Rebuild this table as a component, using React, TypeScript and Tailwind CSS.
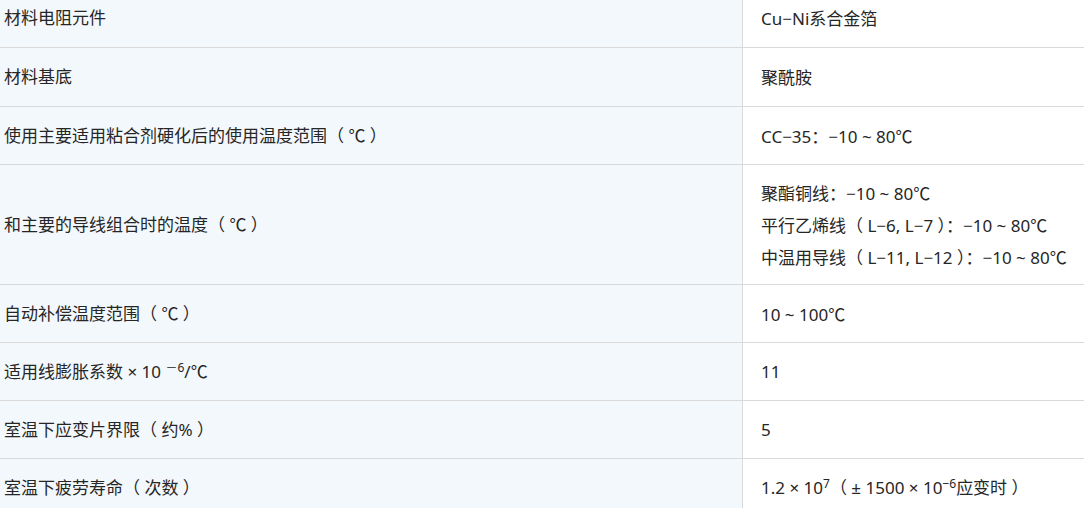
const C = () => <span style={{ fontFamily: '"Noto Sans CJK SC", sans-serif' }}>℃</span>;

const rows: { h: string; label: React.ReactNode; value: React.ReactNode[] }[] = [
  { h: "h-[59px]", label: "材料电阻元件", value: ["Cu−Ni系合金箔"] },
  { h: "h-[59px]", label: "材料基底", value: ["聚酰胺"] },
  {
    h: "h-[58px]",
    label: <>使用主要适用粘合剂硬化后的使用温度范围（ <C /> ）</>,
    value: [<>CC−35：−10 ~ 80<C /></>],
  },
  {
    h: "h-[120px]",
    label: <>和主要的导线组合时的温度（ <C /> ）</>,
    value: [
      <>聚酯铜线：−10 ~ 80<C /></>,
      <>平行乙烯线（ L−6, L−7 ）：−10 ~ 80<C /></>,
      <>中温用导线（ L−11, L−12 ）：−10 ~ 80<C /></>,
    ],
  },
  { h: "h-[58px]", label: <>自动补偿温度范围（ <C /> ）</>, value: [<>10 ~ 100<C /></>] },
  {
    h: "h-[58px]",
    label: (
      <>
        适用线膨胀系数 × 10 <sup className="text-[12px] leading-none">－6</sup>/<C />
      </>
    ),
    value: ["11"],
  },
  { h: "h-[58px]", label: "室温下应变片界限（ 约% ）", value: ["5"] },
  {
    h: "h-[58px]",
    label: "室温下疲劳寿命（ 次数 ）",
    value: [
      <>
        1.2 × 10<sup className="text-[12px] leading-none">7</sup>（ ± 1500 × 10
        <sup className="text-[12px] leading-none">−6</sup>应变时 ）
      </>,
    ],
  },
];

export default function App() {
  return (
    <div
      className="w-[1084px] h-[508px] overflow-hidden bg-white text-[#262626] text-[17px]"
      style={{ fontFamily: '"Noto Sans", "Noto Sans CJK SC", sans-serif' }}
    >
      <div className="-mt-[11px] grid grid-cols-[743px_1fr]">
        {rows.map((row, i) => (
          <div key={i} className="contents">
            <div className={`${row.h} flex items-center bg-[#f3f8fc] border-r border-b border-[#d9d9d9] pl-[4px]`}>
              <span>{row.label}</span>
            </div>
            <div className={`${row.h} flex flex-col justify-center border-b border-[#d9d9d9] pl-[18px] leading-[31px]`}>
              {row.value.map((v, j) => (
                <p key={j}>{v}</p>
              ))}
            </div>
          </div>
        ))}
      </div>
    </div>
  );
}
